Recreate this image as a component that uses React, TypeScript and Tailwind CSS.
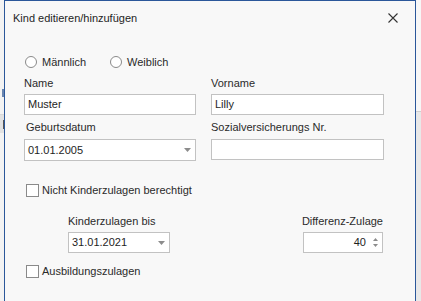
import React from "react";

const font = { fontFamily: '"Liberation Sans", Arial, sans-serif' };

function Radio({ label }: { label: string }) {
  return (
    <div className="flex items-center">
      <div className="w-[12px] h-[12px] rounded-full border border-[#8a8a8a] bg-white" />
      <span className="ml-[5px] text-[11px] leading-[16px] text-[#2a2a2a]">{label}</span>
    </div>
  );
}

function Check({ label }: { label: string }) {
  return (
    <div className="flex items-center">
      <div className="w-[13px] h-[13px] border border-[#8a8a8a] bg-white" />
      <span className="ml-[3px] text-[11px] leading-[16px] text-[#2a2a2a]">{label}</span>
    </div>
  );
}

function Arrow() {
  return (
    <svg width="7" height="4" viewBox="0 0 7 4" className="shrink-0">
      <path d="M0 0 L7 0 L3.5 4 Z" fill="#8c8c8c" />
    </svg>
  );
}

export default function App() {
  return (
    <div className="w-[421px] h-[301px] overflow-hidden flex bg-[#f0f0f0]" style={font}>
      {/* left background sliver */}
      <div className="w-[4px] shrink-0 flex flex-col bg-[#f3f3f3] overflow-hidden">
        <div className="h-[86px]" />
        <div className="h-[14px] flex justify-end">
          <div className="w-[4px] h-[8px] mt-[3px] border-r-2 border-[#6a86b0]" />
        </div>
        <div className="h-[14px]" />
        <div className="h-[1px] bg-[#d8d8d8]" />
        <div className="h-[18px] bg-[#e2e2e2] flex justify-end">
          <div className="w-[3px] h-[9px] mt-[5px] border-r border-[#555]" />
        </div>
      </div>

      {/* dialog */}
      <div className="w-[412px] shrink-0 h-[310px] border border-b-0 border-[#2b579a] bg-[#f8f8f8] flex flex-col">
        {/* title bar */}
        <div className="h-[33px] flex items-center justify-between pl-[8px] pr-[17px]">
          <span className="text-[11px] leading-[16px] text-[#1e1e1e]">Kind editieren/hinzufügen</span>
          <svg width="10" height="10" viewBox="0 0 10 10">
            <path d="M0.5 0.5 L9.5 9.5 M9.5 0.5 L0.5 9.5" stroke="#333" strokeWidth="1.1" />
          </svg>
        </div>

        <div className="pl-[19px] flex flex-col">
          {/* radios */}
          <div className="mt-[20px] h-[16px] flex items-center pl-[1px]">
            <Radio label="Männlich" />
            <div className="w-[24px]" />
            <Radio label="Weiblich" />
          </div>

          {/* Name / Vorname */}
          <div className="mt-[5px] flex gap-[15px]">
            <div className="w-[172px] flex flex-col">
              <span className="h-[16px] text-[11px] leading-[16px] text-[#2a2a2a]">Name</span>
              <div className="mt-[3px] h-[21px] border border-[#c2c2c2] bg-white flex items-center pl-[3px] text-[11px] text-[#1e1e1e]">
                Muster
              </div>
            </div>
            <div className="w-[173px] flex flex-col">
              <span className="h-[16px] text-[11px] leading-[16px] text-[#2a2a2a]">Vorname</span>
              <div className="mt-[3px] h-[21px] border border-[#c2c2c2] bg-white flex items-center pl-[3px] text-[11px] text-[#1e1e1e]">
                Lilly
              </div>
            </div>
          </div>

          {/* Geburtsdatum / Sozialvers */}
          <div className="mt-[4px] flex gap-[15px]">
            <div className="w-[172px] flex flex-col">
              <span className="h-[16px] pl-[2px] text-[11px] leading-[16px] text-[#2a2a2a]">Geburtsdatum</span>
              <div className="mt-[4px] h-[22px] border border-[#c2c2c2] bg-white flex items-center justify-between pl-[3px] pr-[4px] text-[11px] text-[#1e1e1e]">
                <span>01.01.2005</span>
                <Arrow />
              </div>
            </div>
            <div className="w-[173px] flex flex-col">
              <span className="h-[16px] text-[11px] leading-[16px] text-[#2a2a2a]">Sozialversicherungs Nr.</span>
              <div className="mt-[4px] h-[21px] border border-[#c2c2c2] bg-white" />
            </div>
          </div>

          {/* checkbox 1 */}
          <div className="mt-[21px] h-[16px] pl-[2px] flex items-center">
            <Check label="Nicht Kinderzulagen berechtigt" />
          </div>

          {/* Kinderzulagen bis / Differenz-Zulage */}
          <div className="mt-[15px] flex items-start">
            <div className="ml-[44px] w-[102px] flex flex-col">
              <span className="h-[16px] text-[11px] leading-[16px] text-[#2a2a2a]">Kinderzulagen bis</span>
              <div className="mt-[3px] h-[21px] border border-[#c2c2c2] bg-white flex items-center justify-between pl-[3px] pr-[4px] text-[11px] text-[#1e1e1e]">
                <span>31.01.2021</span>
                <Arrow />
              </div>
            </div>
            <div className="ml-[133px] w-[80px] flex flex-col items-end">
              <span className="h-[16px] whitespace-nowrap text-[11px] leading-[16px] text-[#2a2a2a]">Differenz-Zulage</span>
              <div className="mt-[3px] w-[80px] h-[21px] border border-[#c2c2c2] bg-white flex items-center justify-end pr-[4px] text-[11px] text-[#1e1e1e]">
                <span>40</span>
                <div className="ml-[7px] flex flex-col gap-[3px]">
                  <svg width="5" height="3" viewBox="0 0 5 3"><path d="M0 3 L5 3 L2.5 0 Z" fill="#8c8c8c" /></svg>
                  <svg width="5" height="3" viewBox="0 0 5 3"><path d="M0 0 L5 0 L2.5 3 Z" fill="#8c8c8c" /></svg>
                </div>
              </div>
            </div>
          </div>

          {/* checkbox 2 */}
          <div className="mt-[10px] h-[16px] pl-[2px] flex items-center">
            <Check label="Ausbildungszulagen" />
          </div>
        </div>
      </div>

      {/* right background sliver */}
      <div className="flex-1 flex flex-col">
        <div className="h-[111px] bg-[#f7f7f7]" />
        <div className="h-[1px] bg-[#cfcfcf]" />
        <div className="flex-1 bg-[#e8e8e8]" />
      </div>
    </div>
  );
}
